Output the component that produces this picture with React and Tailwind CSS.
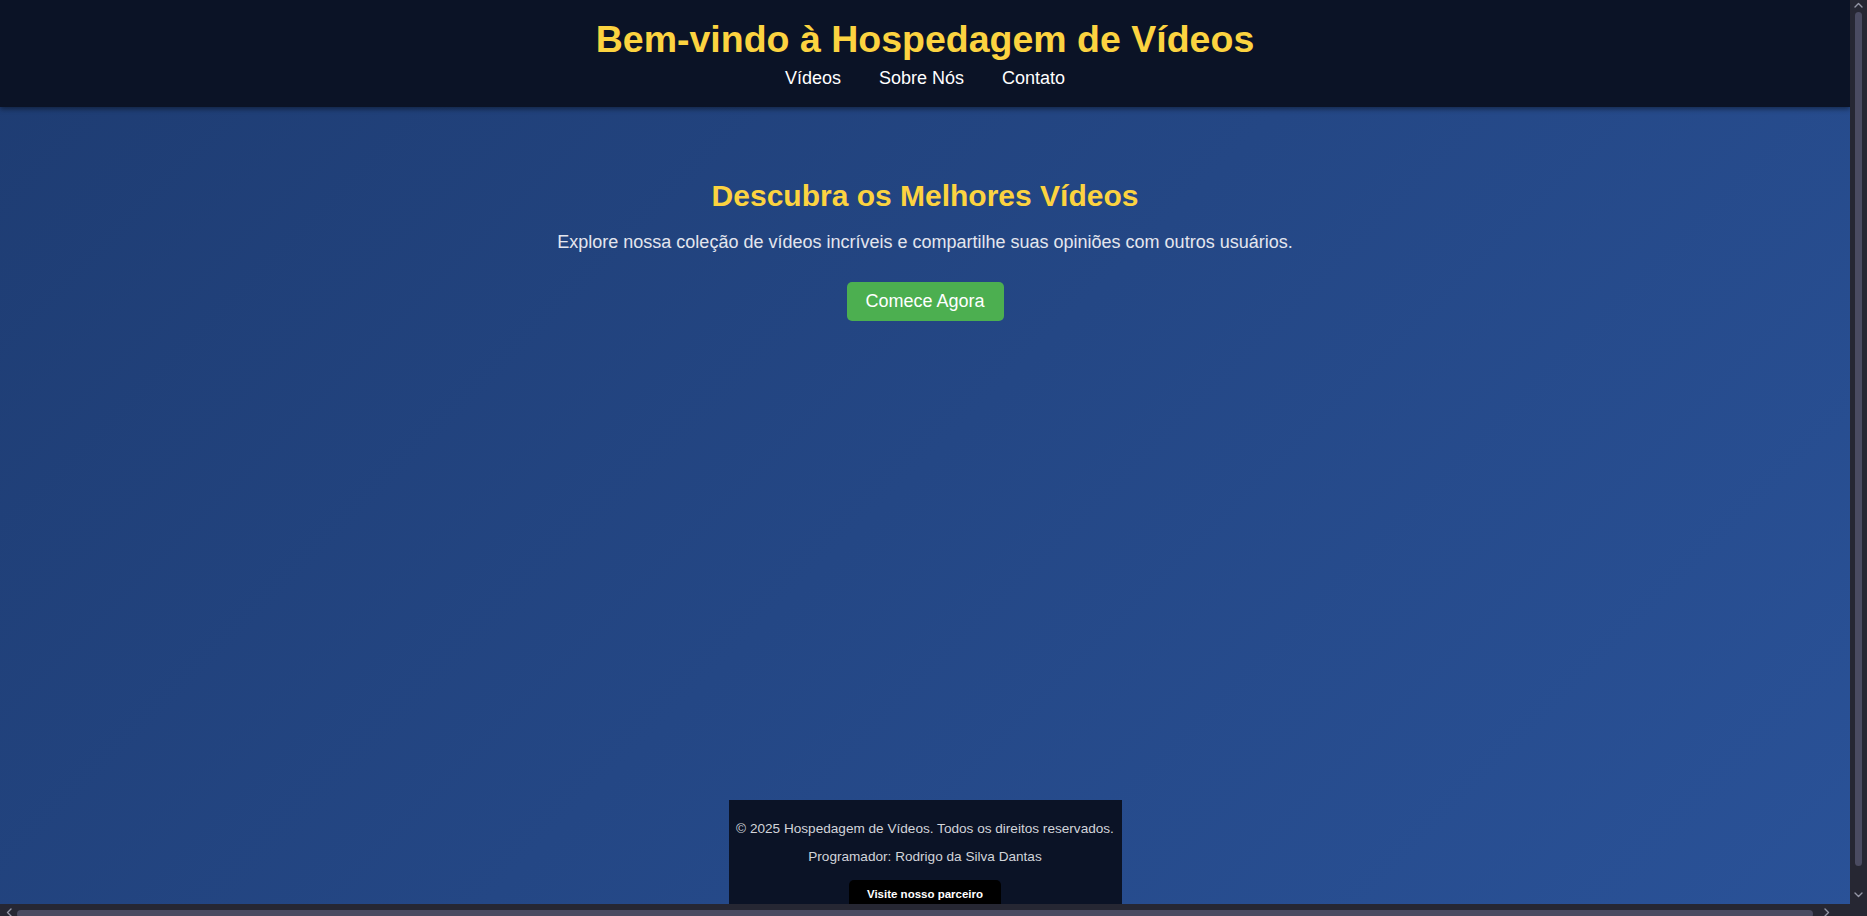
function Chevron({ dir, className }) {
  const paths = {
    up: "M1 5 L4.5 1.5 L8 5",
    down: "M1 1 L4.5 4.5 L8 1",
    left: "M5 1 L1.5 4.5 L5 8",
    right: "M1 1 L4.5 4.5 L1 8",
  };
  const vertical = dir === "up" || dir === "down";
  return (
    <svg
      className={className}
      width={vertical ? 9 : 6}
      height={vertical ? 6 : 9}
      viewBox={vertical ? "0 0 9 6" : "0 0 6 9"}
      fill="none"
      stroke="#9496a6"
      strokeWidth="1.4"
      strokeLinecap="round"
      strokeLinejoin="round"
    >
      <path d={paths[dir]} />
    </svg>
  );
}

export default function App() {
  return (
    <div className="flex h-[916px] w-full flex-col overflow-hidden bg-[#262733] [font-family:'Liberation_Sans',Arial,sans-serif]">
      <div className="flex h-[904px] w-full">
        <div className="flex-1 overflow-hidden">
          <div className="flex w-full flex-col bg-[linear-gradient(135deg,#1e3c72,#2a5298)]">
            <header className="relative z-10 flex h-[107px] w-full flex-col items-center bg-[#0b1326] pt-[18px] shadow-[0_2px_5px_rgba(0,0,0,0.45)]">
              <h1 className="text-[37.5px] font-bold leading-[42px] text-[#fcd340]">
                Bem-vindo à Hospedagem de Vídeos
              </h1>
              <nav className="mt-[8px] flex gap-[38px] text-[18px] leading-[21px] text-white">
                <a href="#">Vídeos</a>
                <a href="#">Sobre Nós</a>
                <a href="#">Contato</a>
              </nav>
            </header>

            <main className="flex h-[693px] flex-col items-center pt-[72px]">
              <h2 className="text-[30px] font-bold leading-[34px] text-[#fcd340]">
                Descubra os Melhores Vídeos
              </h2>
              <p className="mt-[18px] text-[18px] leading-[22px] text-[#e4e6ee]">
                Explore nossa coleção de vídeos incríveis e compartilhe suas opiniões com outros usuários.
              </p>
              <button className="mt-[29px] h-[39px] w-[157px] rounded-[5px] bg-[#4caf50] text-[18px] leading-[21px] text-white">
                Comece Agora
              </button>
            </main>

            <footer className="flex w-[393px] flex-col items-center self-center bg-[#0b1326] px-[8px] pb-[24px] pt-[21px] text-[13.6px] leading-[16px] text-[#d2d4da]">
              <p className="whitespace-nowrap">© 2025 Hospedagem de Vídeos. Todos os direitos reservados.</p>
              <p className="mt-[12px] whitespace-nowrap">Programador: Rodrigo da Silva Dantas</p>
              <a
                href="#"
                className="mt-[15px] flex h-[28px] w-[152px] items-center justify-center rounded-[5px] bg-black text-[11.5px] font-bold text-white"
              >
                Visite nosso parceiro
              </a>
            </footer>
          </div>
        </div>

        <div className="flex w-[17px] flex-col items-center bg-[#262733]">
          <Chevron dir="up" className="mt-[2px]" />
          <div className="mt-[4px] h-[854px] w-[7px] rounded-full bg-[#4a4b61]" />
          <Chevron dir="down" className="mb-[6px] mt-auto" />
        </div>
      </div>

      <div className="flex h-[12px] w-full items-start">
        <div className="flex h-full w-[17px] items-center justify-center">
          <Chevron dir="left" className="mt-[4px]" />
        </div>
        <div className="mt-[6px] h-[8px] w-[1796px] rounded-full bg-[#4a4b61]" />
        <div className="flex h-full w-[37px] items-center justify-center pr-[10px]">
          <Chevron dir="right" className="mt-[4px]" />
        </div>
      </div>
    </div>
  );
}
